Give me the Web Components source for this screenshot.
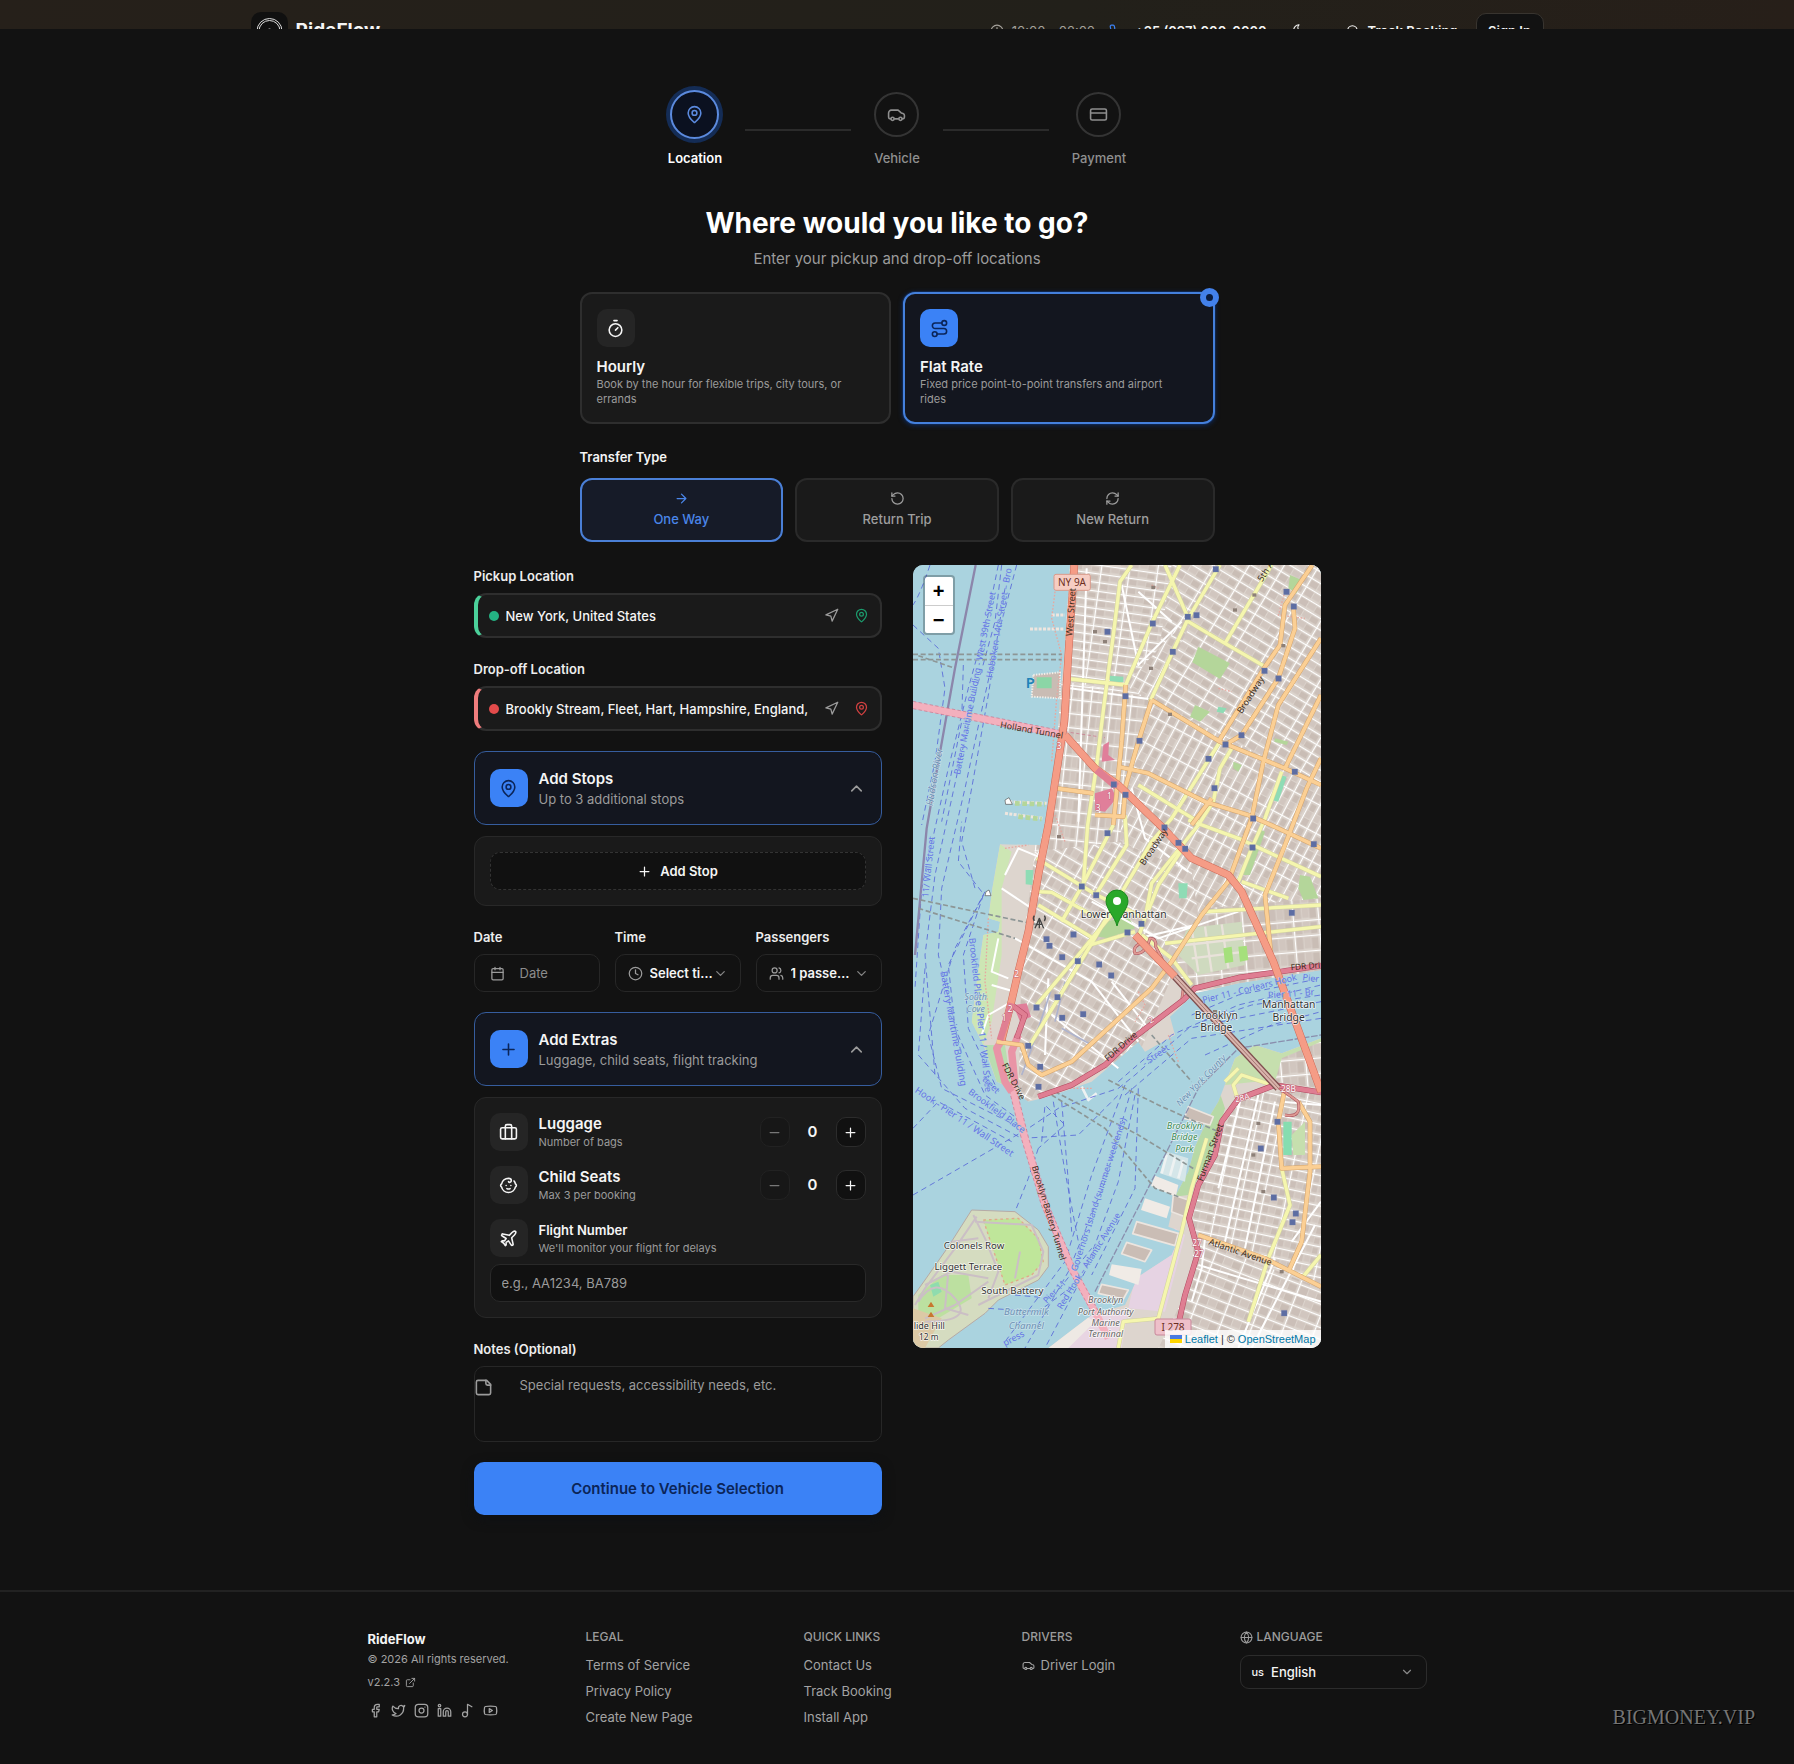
<!DOCTYPE html>
<html lang="en">
<head>
<meta charset="utf-8">
<title>RideFlow – Book a ride</title>
<style>
  html { background: #121212; }
  body {
    margin: 0; color: #f5f5f5; background: #121212;
    font-family: Inter, "Liberation Sans", sans-serif; font-size: 13px; line-height: 20px;
    --blue: #3b82f6; --ink: #0b2559; --muted: #9b9b9b; --card: #1a1a1a; --line: #2a2a2a; --tint: #13161f;
  }
</style>
</head>
<body>
<rf-app></rf-app>

<script>
const ICONS = {
  pin: '<path d="M20 10c0 4.993-5.539 10.193-7.399 11.799a1 1 0 0 1-1.202 0C9.539 20.193 4 14.993 4 10a8 8 0 0 1 16 0"/><circle cx="12" cy="10" r="3"/>',
  car: '<path d="M4.500 17.500H4a2 2 0 0 1-2-2V10a3.500 3.500 0 0 1 3.500-3.500H14l4 3.500 2.300.7a2.400 2.400 0 0 1 1.700 2.300V15.500a2 2 0 0 1-2 2h-.5M9.500 17.500h5"/><circle cx="7" cy="17.500" r="2"/><circle cx="17" cy="17.500" r="2"/>',
  card: '<rect x="2" y="5" width="20" height="14" rx="2"/><path d="M2 10h20"/>',
  timer: '<path d="M10 2h4M12 14l3-3"/><circle cx="12" cy="14" r="8"/>',
  route: '<circle cx="6" cy="19" r="3"/><path d="M9 19h8.500a3.500 3.500 0 0 0 0-7h-11a3.500 3.500 0 0 1 0-7H15"/><circle cx="18" cy="5" r="3"/>',
  arrow: '<path d="M5 12h14M12 5l7 7-7 7"/>',
  undo: '<path d="M3 12a9 9 0 1 0 9-9 9.750 9.750 0 0 0-6.740 2.740L3 8"/><path d="M3 3v5h5"/>',
  refresh: '<path d="M3 12a9 9 0 0 1 9-9 9.750 9.750 0 0 1 6.740 2.740L21 8"/><path d="M21 3v5h-5M21 12a9 9 0 0 1-9 9 9.750 9.750 0 0 1-6.740-2.740L3 16"/><path d="M8 16H3v5"/>',
  nav: '<path d="M3 11 22 2l-9 19-2-8z"/>',
  up: '<path d="m18 15-6-6-6 6"/>',
  down: '<path d="m6 9 6 6 6-6"/>',
  plus: '<path d="M5 12h14M12 5v14"/>',
  minus: '<path d="M5 12h14"/>',
  calendar: '<path d="M8 2v4M16 2v4M3 10h18"/><rect x="3" y="4" width="18" height="18" rx="2"/>',
  clock: '<circle cx="12" cy="12" r="10"/><path d="M12 6v6l4 2"/>',
  users: '<path d="M16 21v-2a4 4 0 0 0-4-4H6a4 4 0 0 0-4 4v2"/><circle cx="9" cy="7" r="4"/><path d="M22 21v-2a4 4 0 0 0-3-3.870M16 3.130a4 4 0 0 1 0 7.750"/>',
  bag: '<path d="M16 20V4a2 2 0 0 0-2-2h-4a2 2 0 0 0-2 2v16"/><rect x="2" y="6" width="20" height="14" rx="2"/>',
  baby: '<path d="M9 12h.01M15 12h.01M10 16c.5.3 1.200.5 2 .5s1.500-.2 2-.5"/><path d="M19 6.300a9 9 0 0 1 1.800 3.900 2 2 0 0 1 0 3.600 9 9 0 0 1-17.600 0 2 2 0 0 1 0-3.600A9 9 0 0 1 12 3c2 0 3.500 1.100 3.500 2.500s-.9 2.500-2 2.500c-.8 0-1.500-.4-1.500-1"/>',
  plane: '<path d="M17.800 19.200 16 11l3.500-3.500C21 6 21.500 4 21 3c-1-.5-3 0-4.500 1.500L13 8 4.800 6.200c-.5-.1-.9.1-1.100.5l-.3.5c-.2.5-.1 1 .3 1.300L9 12l-2 3H4l-1 1 3 2 2 3 1-1v-3l3-2 3.500 5.300c.3.4.8.5 1.300.3l.5-.2c.4-.3.6-.7.5-1.200z"/>',
  note: '<path d="M16 3H5a2 2 0 0 0-2 2v14a2 2 0 0 0 2 2h14a2 2 0 0 0 2-2V8Z"/><path d="M15 3v4a2 2 0 0 0 2 2h4"/>',
  phone: '<path d="M22 16.920v3a2 2 0 0 1-2.180 2 19.790 19.790 0 0 1-8.630-3.070 19.500 19.500 0 0 1-6-6 19.790 19.790 0 0 1-3.070-8.670A2 2 0 0 1 4.110 2h3a2 2 0 0 1 2 1.720c.127.960.361 1.903.7 2.810a2 2 0 0 1-.45 2.110L8.090 9.910a16 16 0 0 0 6 6l1.270-1.270a2 2 0 0 1 2.110-.45c.907.339 1.850.573 2.810.7A2 2 0 0 1 22 16.920z"/>',
  moon: '<path d="M12 3a6 6 0 0 0 9 9 9 9 0 1 1-9-9Z"/>',
  search: '<circle cx="11" cy="11" r="8"/><path d="m21 21-4.300-4.300"/>',
  globe: '<circle cx="12" cy="12" r="10"/><path d="M12 2a14.500 14.500 0 0 0 0 20 14.500 14.500 0 0 0 0-20M2 12h20"/>',
  external: '<path d="M15 3h6v6M10 14 21 3M18 13v6a2 2 0 0 1-2 2H5a2 2 0 0 1-2-2V8a2 2 0 0 1 2-2h6"/>',
  facebook: '<path d="M18 2h-3a5 5 0 0 0-5 5v3H7v4h3v8h4v-8h3l1-4h-4V7a1 1 0 0 1 1-1h3z"/>',
  twitter: '<path d="M22 4s-.7 2.100-2 3.400c1.600 10-9.400 17.300-18 11.600 2.200.1 4.400-.6 6-2C3 15.500.5 9.600 3 5c2.200 2.600 5.600 4.100 9 4-.9-4.200 4-6.600 7-3.800 1.100 0 3-1.200 3-1.200z"/>',
  instagram: '<rect x="2" y="2" width="20" height="20" rx="5"/><circle cx="12" cy="12" r="4"/><path d="M17.500 6.500h.01"/>',
  linkedin: '<path d="M16 8a6 6 0 0 1 6 6v7h-4v-7a2 2 0 0 0-4 0v7h-4v-7a6 6 0 0 1 6-6z"/><rect x="2" y="9" width="4" height="12"/><circle cx="4" cy="4" r="2"/>',
  music: '<circle cx="8" cy="18" r="4"/><path d="M12 18V2l7 4"/>',
  youtube: '<path d="M2.500 17a24.120 24.120 0 0 1 0-10 2 2 0 0 1 1.400-1.400 49.560 49.560 0 0 1 16.200 0A2 2 0 0 1 21.500 7a24.120 24.120 0 0 1 0 10 2 2 0 0 1-1.400 1.400 49.550 49.550 0 0 1-16.200 0A2 2 0 0 1 2.500 17"/><path d="m10 15 5-3-5-3z"/>'
};

const BASE = `
  *, *::before, *::after { box-sizing: border-box; }
  :host { display: block; }
  button, input, select, textarea { font: inherit; color: inherit; margin: 0; outline: none; }
  button { cursor: pointer; padding: 0; background: none; border: 0; }
  select { appearance: none; }
  a { color: inherit; text-decoration: none; }
  h1, h2, h3, p, ul { margin: 0; padding: 0; }
`;

function define(name, css, html) {
  customElements.define(name, class extends HTMLElement {
    connectedCallback() {
      if (this.shadowRoot) return;
      const attr = (key, fallback = '') => this.getAttribute(key) ?? fallback;
      this.attachShadow({ mode: 'open' }).innerHTML =
        `<style>${BASE}${css}</style>${typeof html === 'function' ? html(attr, this) : html}`;
    }
  });
}

define('rf-icon', `
  :host { display: inline-flex; flex: none; }
  svg { display: block; fill: none; stroke: currentColor; stroke-linecap: round; stroke-linejoin: round; }
`, a => `<svg width="${a('size', 16)}" height="${a('size', 16)}" viewBox="0 0 24 24" stroke-width="${a('weight', 2)}" aria-hidden="true">${ICONS[a('name')]}</svg>`);

define('rf-badge', `
  :host { display: flex; flex: none; align-items: center; justify-content: center; width: 38px; height: 38px;
          border-radius: 10px; background: #252525; color: #f5f5f5; }
  :host([tone="blue"]) { background: var(--blue); color: var(--ink); }
`, a => `<rf-icon name="${a('icon')}" size="19"></rf-icon>`);

/* ---------- header ---------- */
define('rf-header', `
  :host { height: 29px; overflow: hidden; background: linear-gradient(100deg, #26201a, #22201a 60%, #271f19); }
  header { display: flex; align-items: center; justify-content: space-between; height: 60px;
           max-width: 1293px; margin: 0 auto; }
  .brand { display: flex; align-items: center; gap: 8px; font-weight: 700; font-size: 19px; }
  .mark { width: 37px; height: 37px; border-radius: 10px; background: #101010; }
  .name { padding-top: 2px; }
  nav, .item { display: flex; align-items: center; }
  nav { gap: 18px; padding-top: 2px; font-weight: 600; }
  .item { gap: 8px; }
  .hours { color: #a5a29c; font-weight: 400; }
  .phone rf-icon { color: var(--blue); }
  .phone { gap: 12px; margin-left: -4px; }
  .moon { margin: 2px 22px 0 7px; }
  .sign { height: 36px; width: 68px; border: 1px solid #38342f; border-radius: 10px; background: #121212; }
`, `
  <header>
    <a class="brand" href="#">
      <svg class="mark" viewBox="0 0 37 37" fill="none" stroke="#ddd" aria-hidden="true">
        <circle cx="18.500" cy="19" r="12.500"/><circle cx="18.500" cy="19" r="10.500"/><circle cx="18.500" cy="21" r="4"/>
      </svg><span class="name">RideFlow</span></a>
    <nav>
      <span class="item hours"><rf-icon name="clock" size="14"></rf-icon>10:00 - 02:00</span>
      <a class="item phone" href="#"><rf-icon name="phone" size="14"></rf-icon>+35 (097) 000-0000</a>
      <button class="moon" aria-label="Toggle theme"><rf-icon name="moon" size="14"></rf-icon></button>
      <a class="item" href="#"><rf-icon name="search" size="14"></rf-icon>Track Booking</a>
      <button class="sign">Sign In</button>
    </nav>
  </header>`);

/* ---------- stepper ---------- */
define('rf-step', `
  :host { display: flex; flex-direction: column; align-items: center; gap: 12px; color: #8f8f8f; font-weight: 500; line-height: 18px; }
  .dot { display: flex; align-items: center; justify-content: center; width: 45px; height: 45px;
         border: 2px solid #343434; border-radius: 50%; }
  :host([active]) { color: #fff; font-weight: 600; }
  :host([active]) .dot { width: 49px; height: 49px; margin: -2px; border-color: #5b8ade; color: #5b8ade;
         background: #0b1120; box-shadow: 0 0 0 4px #142c55; }
`, a => `<span class="dot"><rf-icon name="${a('icon')}" size="19"></rf-icon></span><slot></slot>`);

define('rf-stepper', `
  :host { display: flex; align-items: center; justify-content: center; gap: 23px; }
  i { width: 106px; height: 2px; background: #2b2b2b; }
`, `<rf-step icon="pin" active>Location</rf-step><i></i><rf-step icon="car">Vehicle</rf-step><i></i><rf-step icon="card">Payment</rf-step>`);

/* ---------- service and transfer choice ---------- */
define('rf-service', `
  :host { flex: 1; position: relative; }
  button { display: flex; flex-direction: column; align-items: flex-start; width: 100%; height: 100%; padding: 15px;
           text-align: left; border: 2px solid #2e2e2e; border-radius: 12px; background: var(--card); }
  :host([selected]) button { border-color: #4480dc; background: var(--tint); box-shadow: 0 0 0 1px #10254a, 0 1px 4px 1px #10254a; }
  strong { margin-top: 10px; font-size: 15px; line-height: 20px; font-weight: 600; }
  button > span { max-width: 260px; color: var(--muted); font-size: 11px; line-height: 15px; }
  .mark { display: none; position: absolute; top: -4px; right: -4px; width: 19px; height: 19px;
          border: 6px solid #4381ea; border-radius: 50%; background: #0a1b3d; }
  :host([selected]) .mark { display: block; }
`, (a, el) => `<button aria-pressed="${el.hasAttribute('selected')}"><rf-badge icon="${a('icon')}" ${el.hasAttribute('selected') ? 'tone="blue"' : ''}></rf-badge>
   <strong>${a('label')}</strong><span><slot></slot></span></button><i class="mark"></i>`);

define('rf-transfer', `
  :host { flex: 1; }
  button { display: flex; flex-direction: column; align-items: center; justify-content: center; gap: 3px; width: 100%; height: 64px;
           border: 2px solid #2a2a2a; border-radius: 12px; background: var(--card); color: #9e9e9e; font-weight: 500; }
  :host([selected]) button { border-color: #4a7fd6; background: #161b28; color: #4a86ea; }
`, (a, el) => `<button aria-pressed="${el.hasAttribute('selected')}"><rf-icon name="${a('icon')}" size="15"></rf-icon><slot></slot></button>`);

/* ---------- form parts ---------- */
const LABEL = `label { display: block; margin-bottom: 6px; line-height: 22px; font-weight: 600; color: #ededed; }`;

define('rf-place', `
  ${LABEL}
  .box { display: flex; align-items: center; height: 45px; padding: 0 11px; background: var(--card);
         border: 2px solid #2e2e2e; border-left: 4px solid var(--edge); border-radius: 12px; }
  :host { --edge: #4bd09a; --dot: #24b383; --pin: #1c9a6c; }
  :host([kind="drop"]) { --edge: #ef7d7d; --dot: #e34b4b; --pin: #d04040; }
  i { flex: none; width: 10px; height: 10px; margin-right: 7px; border-radius: 50%; background: var(--dot); }
  input { flex: 1; min-width: 0; padding: 0; border: 0; background: none; font-weight: 500; }
  button { display: flex; margin-left: 15px; color: #9b9b9b; }
  .pin { color: var(--pin); }
`, a => `<label for="q">${a('label')}</label>
  <div class="box"><i></i><input id="q" type="text" value="${a('value')}">
  <button type="button" aria-label="Use my position"><rf-icon name="nav" size="15"></rf-icon></button>
  <button type="button" class="pin" aria-label="Pick on map"><rf-icon name="pin" size="15"></rf-icon></button></div>`);

define('rf-fold', `
  button { display: flex; align-items: center; gap: 11px; width: 100%; height: 74px; padding: 0 15px; text-align: left;
           border: 1px solid #365d9e; border-radius: 12px; background: var(--tint); }
  .text { flex: 1; display: flex; flex-direction: column; }
  strong { font-size: 15px; line-height: 21px; font-weight: 600; }
  span span { color: var(--muted); line-height: 20px; }
  .chev { color: #9b9b9b; }
`, a => `<button type="button" aria-expanded="true"><rf-badge tone="blue" icon="${a('icon')}"></rf-badge>
  <span class="text"><strong>${a('label')}</strong><span>${a('hint')}</span></span><rf-icon class="chev" name="up" size="19"></rf-icon></button>`);

define('rf-panel', `
  :host { display: flex; flex-direction: column; padding: 15px; border: 1px solid #282828; border-radius: 12px; background: var(--card); }
`, `<slot></slot>`);

define('rf-add-stop', `
  button { display: flex; align-items: center; justify-content: center; gap: 8px; width: 100%; height: 38px;
           border: 1px dashed #333; border-radius: 10px; background: #111; font-weight: 600; }
`, `<button type="button"><rf-icon name="plus" size="15"></rf-icon>Add Stop</button>`);

define('rf-picker', `
  :host { flex: 1; min-width: 0; }
  ${LABEL}
  .box { position: relative; display: flex; align-items: center; height: 38px; border: 1px solid #272727; border-radius: 10px; background: #121212; }
  .lead { position: absolute; left: 12px; color: #9b9b9b; pointer-events: none; }
  .chev { position: absolute; right: 12px; color: #858585; pointer-events: none; }
  select, input { width: 100%; height: 100%; border: 0; background: none; border-radius: 10px; }
  select { padding: 0 26px 0 34px; font-weight: 600; text-overflow: ellipsis; white-space: nowrap; overflow: hidden; }
  input { padding: 0 8px 0 45px; }
  input::placeholder { color: #8c8c8c; opacity: 1; }
  :host([kind="text"]) .lead { left: 15px; }
`, a => `<label for="f">${a('label')}</label><div class="box">` + (a('kind') === 'text'
    ? `<input id="f" type="text" placeholder="${a('value')}">`
    : `<select id="f"><option>${a('value')}</option></select><rf-icon class="chev" name="down" size="15"></rf-icon>`)
  + `<rf-icon class="lead" name="${a('icon')}" size="15"></rf-icon></div>`);

define('rf-counter', `
  :host { display: flex; align-items: center; gap: 11px; height: 38px; margin-bottom: 15px; }
  .text { flex: 1; display: flex; flex-direction: column; }
  strong { font-size: 15px; line-height: 20px; font-weight: 600; }
  .text span { color: var(--muted); font-size: 11px; line-height: 17px; }
  button { display: flex; align-items: center; justify-content: center; width: 30px; height: 30px;
           border: 1px solid #2c2c2c; border-radius: 10px; background: #111; }
  button:disabled { color: #777; background: #171717; border-color: #222; }
  output { width: 24px; text-align: center; font-size: 15px; font-weight: 600; }
`, a => `<rf-badge icon="${a('icon')}"></rf-badge><div class="text"><strong>${a('label')}</strong><span>${a('hint')}</span></div>
  <button type="button" disabled aria-label="Fewer"><rf-icon name="minus" size="15"></rf-icon></button><output>0</output>
  <button type="button" aria-label="More"><rf-icon name="plus" size="15"></rf-icon></button>`);

define('rf-flight', `
  label { display: flex; align-items: center; gap: 11px; margin-bottom: 7px; }
  .text { display: flex; flex-direction: column; padding-top: 2px; }
  strong { line-height: 19px; font-weight: 600; }
  .text span { color: var(--muted); font-size: 11px; line-height: 17px; }
  input { display: block; width: 100%; height: 38px; padding: 0 11px; border: 1px solid #292929; border-radius: 10px; background: #111; }
  input::placeholder { color: #9b9b9b; opacity: 1; }
`, `<label for="n"><rf-badge icon="plane"></rf-badge><span class="text"><strong>Flight Number</strong><span>We'll monitor your flight for delays</span></span></label>
  <input id="n" type="text" placeholder="e.g., AA1234, BA789">`);

define('rf-notes', `
  ${LABEL}
  .box { position: relative; }
  rf-icon { position: absolute; left: 0; top: 12px; color: #9b9b9b; }
  textarea { display: block; width: 100%; height: 76px; padding: 8px 12px 8px 45px; resize: none; border: 1px solid #272727;
             border-radius: 10px; background: #121212; }
  textarea::placeholder { color: #9b9b9b; opacity: 1; }
`, `<label for="t">Notes (Optional)</label><div class="box"><textarea id="t" placeholder="Special requests, accessibility needs, etc."></textarea>
  <rf-icon name="note" size="19"></rf-icon></div>`);

define('rf-submit', `
  button { width: 100%; height: 53px; border-radius: 10px; background: var(--blue); color: var(--ink); font-size: 15px; font-weight: 600; box-shadow: 0 4px 12px #0e1014; }
`, `<button type="button"><slot></slot></button>`);

/* ---------- map ---------- */
const line = (d, color, width, extra = '') => `<path d="${d}" stroke="${color}" stroke-width="${width}" ${extra}/>`;
const road = (list, fill, edge, width) =>
  list.map(d => line(d, edge, width + 3)).join('') + list.map(d => line(d, fill, width)).join('');
const label = (x, y, text, size, turn = 0, cls = '') =>
  `<text transform="translate(${x} ${y}) rotate(${turn})" font-size="${size}" class="${cls}">${text}</text>`;
const grid = (id, w, h, turn) => `<pattern id="${id}" width="${w}" height="${h}" patternUnits="userSpaceOnUse" patternTransform="rotate(${turn})">
  <rect width="${w}" height="${h}" fill="#dcd4cd"/><rect x="5" y="5" width="${w / 3 - 5}" height="${h - 10}" fill="#cbbfb8"/>
  <rect x="${w / 3 + 3}" y="5" width="${w / 3 - 5}" height="${h - 12}" fill="#d1c6bf"/><rect x="${w * 2 / 3}" y="7" width="${w / 3 - 5}" height="${h - 12}" fill="#c9bdb5"/><path d="M0 0H${w}M0 0V${h}" stroke="#fff" stroke-width="6"/></pattern>`;

const YELLOW = ['M680 30 645 80 625 240 597 450 575 630 548 810 535 990', 'M825 30 740 205 662 390', 'M780 30 850 190',
  'M945 30 850 190 803 290 735 440', 'M850 200 955 262 1080 335', 'M1100 30 960 265', 'M497 372 662 390',
  'M945 560 800 790 740 860 560 1165 375 1470', 'M980 580 945 640 925 740 880 810 740 985 722 1080 700 1150',
  'M1130 650 1080 790 1040 880 1000 980', 'M700 690 830 770 880 800', 'M395 910 575 1020 720 1090', 'M400 1010 440 1012 570 1085',
  'M400 1050 565 1150', 'M625 810 530 995 470 1100', 'M660 780 665 870 572 1020', 'M660 1030 520 1200 395 1350', 'M555 1170 690 1130',
  'M840 870 760 990 725 1080', 'M850 795 1000 850 1248 965', 'M1010 980 1150 1030', 'M900 1070 1248 1050', 'M780 1165 1248 1115', 'M710 1140 800 1210 860 1290',
  'M1130 1840 1155 1950 1090 2110 1030 2300', 'M1000 1640 985 1590 1010 1560 1100 1590', 'M960 1580 1000 1540', 'M905 1750 860 1900 830 2030 760 2290 655 2300 640 2379', 'M1248 2100 1190 2170'];
const ORANGE = ['M662 390 650 560 625 810', 'M740 435 945 560 1140 640 1248 690', 'M740 435 700 560 660 700 655 785 570 780',
  'M1222 30 1140 150 1125 270 1080 335 940 560', 'M1165 155 1170 220 1120 370 1010 540 960 570', 'M1248 250 1120 450 1075 620 1040 790 970 980 890 1080 800 1220 740 1300 500 1520 410 1560 370 1530 350 1470 275 1460',
  'M1248 420 1140 640', 'M1248 610 1205 700 1140 870 1080 1020 1100 1220', 'M640 635 730 655 900 740 1030 780', 'M455 700 565 715', 'M1030 780 1120 820 1248 880', 'M860 810 920 730',
  'M1140 1600 1120 1700 1130 1840 1248 1835', 'M1180 1640 1215 1700 1215 1850 1190 2060 1150 2150', 'M880 2040 1080 2110 1248 2195'];
const TRUNK = ['M508 30 490 300 478 500 430 810 400 960 370 1130 340 1250 318 1345 290 1455', 'M480 540 570 640 640 690 770 815 860 910 970 960 1010 1010 1105 1220 1248 1610', 'M690 1140 810 1265'];
const MOTOR = ['M400 1625 500 1590 600 1530 690 1445 835 1335 870 1300 1000 1268 1248 1232', 'M1248 1612 1110 1590 1000 1632 950 1700 930 1800 880 1890 852 1990 880 2090 840 2220 815 2330', 'M320 1350 360 1380 335 1450'];
const RAMPS = ['M715 1160Q680 1175 690 1195 720 1200 735 1150 755 1150 752 1175L780 1230 835 1300 830 1340', 'M1140 1680Q1190 1690 1180 1640', 'M1110 1590 1180 1640'];
const FERRY = ['M75 30Q45 120 24 150', 'M24 210 100 280 120 400 90 620 50 810', 'M280 30 245 200 190 400 130 640 50 1000 30 1300', 'M290 30 270 200 215 400 160 640 90 960 60 1200 90 1560',
  'M335 30 290 200 240 420 180 700 110 1000 100 1200 170 1500', 'M300 100 250 420 200 700 170 860 210 1000', 'M175 330 170 500 110 800', 'M230 1010 160 920 170 800', 'M240 1010 150 1180 70 1440 110 1600 330 1710',
  'M230 1030 130 1230 150 1420 240 1620 350 1700', 'M235 1020 175 1200 190 1420 280 1610', 'M60 1240 40 1500 180 1660 350 1750 520 1740 640 1620', 'M24 1920 370 1720 460 1660 640 1600', 'M24 1720 100 1640 320 1760',
  'M445 1640 480 1850 520 2060', 'M470 1640 490 1880 500 2030', 'M660 1590 560 1860 480 2120 300 2360', 'M680 1600 600 1880 490 2150 360 2379', 'M690 1620 640 1880 540 2150 420 2379', 'M700 1600 690 1900 560 2160',
  'M640 1600 690 1560 850 1420 1248 1340', 'M660 1620 860 1450 1248 1390', 'M640 1580 800 1440 1000 1350 1248 1290', 'M860 1380 1000 1320 1248 1270', 'M400 1780 370 1870 330 1970', 'M410 1760 420 1650 480 1710 400 1780', 'M330 2220 440 2230 560 2080', 'M250 2260 400 2270 520 2180', 'M890 1400 1040 1350 1248 1320', 'M900 1500 1100 1410 1248 1370'];
const STATIONS = [[932, 42], [607, 230], [743, 205], [848, 185], [874, 180], [803, 290], [1144, 110], [1166, 154], [1078, 347], [1120, 370], [661, 423], [703, 557], [961, 568], [1009, 540], [910, 611], [928, 699], [1169, 650], [1044, 790], [626, 688], [661, 719],
  [607, 834], [778, 817], [820, 863], [840, 881], [1042, 877], [1226, 867], [530, 994], [573, 1020], [709, 1106], [667, 1132], [505, 1138], [424, 1152], [433, 1172], [471, 1206], [518, 1218], [582, 1228], [618, 1261], [457, 1326], [394, 1357], [471, 1388], [534, 1377], [369, 1472], [405, 1535], [1160, 1073], [400, 1595], [1117, 1700], [1067, 1780], [1106, 1927], [1172, 1975], [1162, 2001], [1137, 2274]];
const MANHATTAN = 'M495 30 478 300 465 430 455 600 430 760 405 870 285 868 262 1000 250 1090 285 1100 280 1130 235 1140 215 1280 200 1400 235 1470 275 1580 320 1600 370 1640 440 1622 560 1580 700 1460 720 1490 810 1440 795 1385 870 1315 1000 1285 1248 1245V30Z';
const BROOKLYN = 'M1248 1450 1130 1495 1050 1470 990 1510 940 1640 910 1690 870 1775 850 1850 810 1925 790 2015 830 2030 800 2100 700 2165 660 2250 560 2280 430 2379H1248Z';

define('rf-map', `
  :host { position: relative; min-height: 783px; align-self: start; overflow: hidden; border-radius: 10px; background: #aad3df; }
  svg.map { display: block; width: 100%; height: 783px; }
  .map text { font-family: "Noto Sans", sans-serif; fill: #333; stroke: #fff; stroke-opacity: .75; stroke-width: 5; paint-order: stroke; stroke-linejoin: round; }
  .map .mid { text-anchor: middle; }
  .map .ferry { fill: #6573e6; stroke: #aad3df; stroke-width: 3; }
  .map .water { fill: #6c91b4; font-style: italic; stroke: #d3e6ee; stroke-width: 4; }
  .map .park { fill: #3a8a55; font-style: italic; text-anchor: middle; }
  .map .port { fill: #666; font-style: italic; text-anchor: middle; }
  .map .road { fill: #3d2f22; stroke: none; }
  .map .exit { fill: #fff; stroke: #b9566a; stroke-width: 3; }
  .map .shield { fill: #6b2d22; stroke: none; text-anchor: middle; }
  .map .parking { fill: #1f83b8; stroke: none; font-weight: 600; }
  .zoom { position: absolute; top: 10px; left: 10px; display: flex; flex-direction: column; border: 2px solid rgba(0,0,0,.25); border-radius: 4px; background: #fff; background-clip: padding-box; }
  .zoom button { width: 28px; height: 28px; color: #000; font: 700 20px/26px "Liberation Sans", sans-serif; }
  .zoom button + button { border-top: 1px solid #ccc; }
  .credit { position: absolute; right: 0; bottom: 0; display: flex; align-items: center; gap: 3px; padding: 0 5px; color: #333;
            background: rgba(255,255,255,.8); font: 11px/18px "Liberation Sans", sans-serif; }
  .credit a { color: #0078a8; }
  .pinmark { position: absolute; left: 50%; top: 324px; margin-left: -12px; }
`, () => `
  <svg class="map" viewBox="24 30 1224 2349" preserveAspectRatio="xMidYMid slice" fill="none" stroke-linejoin="round" role="img" aria-label="Map of Lower Manhattan">
    <defs>
      ${grid('gw', 84, 26, 8)}${grid('ge', 90, 30, 31)}${grid('gs', 80, 29, -62)}${grid('gd', 66, 36, 30)}${grid('gl', 76, 46, -5)}${grid('gb', 90, 33, 21)}${grid('gh', 66, 30, 12)}${grid('gt', 60, 42, 6)}
      <clipPath id="land"><path d="${MANHATTAN}"/></clipPath><clipPath id="kings"><path d="${BROOKLYN}"/></clipPath>
    </defs>
    <path d="M24 30H1248V2379H24Z" fill="#aad3df"/>
    <g clip-path="url(#land)">
      <path d="M180 30H1248V1700H180Z" fill="#ddd5ce"/>
      <path d="M480 30H830L740 440 480 420Z" fill="url(#gw)"/><path d="M430 370 740 430 640 900 380 1000Z" fill="url(#gt)"/>
      <path d="M800 30H1248V690L740 435Z" fill="url(#ge)"/><path d="M660 700 740 435 1248 690V1060L890 1080 720 1000 640 900Z" fill="url(#gs)"/>
      <path d="M660 390 800 240 860 200 740 440Z" fill="url(#gs)"/>
      <path d="M390 890 640 860 860 950 880 1080 700 1500 340 1650 350 1200Z" fill="url(#gd)"/><path d="M900 1060 1248 1030V1260L860 1320 780 1230Z" fill="url(#gl)"/>
      <path d="M285 868 262 1000 250 1090 235 1140 200 1400 235 1470 260 1400 290 1200 290 1000 320 890Z" fill="#cde6b4"/>
      <path d="M238 1470 300 1470 320 1600 275 1580Z" fill="#b9ddb0"/><path d="M845 1120 1010 1100 1020 1230 880 1260 820 1200Z" fill="#cfdabf"/>
      <path d="M840 1170 1020 1150M860 1210 1020 1190M900 1115 920 1250M950 1108 970 1240M860 1120 880 1250" stroke="#e9e2da" stroke-width="7"/>
    </g>
    <g fill="#b4d69a">
      <path d="M880 275 975 325 945 372 862 322Z"/><path d="M600 1100 670 1085 690 1120 610 1150 580 1145Z"/><path d="M1125 660 1145 665 1120 740 1100 735Z" fill="#8fdcb5"/>
      <path d="M1060 820 1080 830 1035 960 1015 960Z"/><path d="M1185 960 1215 965 1240 1030 1195 1035 1180 1000Z"/><path d="M820 985 848 985 845 1030 822 1030Z" fill="#8fdcb5"/>
      <path d="M615 362 655 365 655 382 615 380Z" fill="#8fdcb5"/><path d="M362 945 385 945 382 990 362 988Z" fill="#8fdcb5"/><path d="M1155 60 1190 75 1175 115 1150 100Z"/><path d="M870 450 915 470 885 500 855 485Z"/><path d="M940 455 965 460 955 475 935 470Z" fill="#8fdcb5"/><path d="M955 1180 980 1175 985 1220 960 1225ZM1000 1175 1025 1172 1030 1215 1005 1220Z" fill="#a5e07c"/><path d="M1110 550 1150 560 1145 570 1108 560ZM985 620 1010 630 1000 650 985 640Z"/>
    </g>
    <path d="M385 360 465 352 465 430 380 425Z" fill="#c9bcb4" stroke="#f3efe9" stroke-width="6" stroke-dasharray="4 4"/><path d="M395 367H440V400H395Z" fill="#8bd6a6"/>
    <path d="M375 222H475M440 180H480M300 740 425 745M300 775 415 790" stroke="#efe6df" stroke-width="9" stroke-dasharray="9 4"/>
    <path d="M330 745 420 748M340 785 410 792" stroke="#b4d69a" stroke-width="14" stroke-dasharray="14 8"/>
    <g clip-path="url(#kings)">
      <path d="M400 1400H1248V2379H400Z" fill="#ddd5ce"/><path d="M1000 1620 1248 1600V2190L870 2050 860 1960Z" fill="url(#gh)"/>
      <path d="M870 2050 1248 2200V2379H760L850 2200Z" fill="url(#gb)"/>
      <path d="M1248 1450 1130 1495 1050 1470 990 1510 960 1590 1248 1560Z" fill="#c6dfae"/><path d="M1130 1510 1248 1460V1600L1110 1580Z" fill="url(#gl)"/><path d="M940 1600 960 1660 920 1800 850 1920 810 1925 870 1775Z" fill="#b7d9a6"/>
      <path d="M720 2090 810 2020 840 2040 780 2270 670 2260 690 2170Z" fill="#e6d3e3"/><path d="M560 2280 670 2260 650 2379H470Z" fill="#e8d5e2"/><path d="M430 2379 545 2285 570 2300 490 2379Z" fill="#eee9e4"/><path d="M1135 1700H1160V1800H1135Z" fill="#86ddb0"/><path d="M1160 1740 1200 1700 1200 1800 1165 1800Z" fill="#c6dfae"/>
    </g>
    <g fill="#cabdb5" stroke="#ece5df" stroke-width="5"><path d="M695 2000 820 2035 810 2072 683 2036Z"/><path d="M665 2062 740 2085 720 2120 650 2096Z"/><path d="M590 2188 670 2205 655 2232 580 2215Z"/><path d="M850 1655 925 1685 915 1710 838 1690Z"/><path d="M805 1920 850 1935 840 1985 800 1970Z"/></g>
    <g fill="#f0ebe6"><path d="M620 2128 710 2142 700 2190 612 2160Z"/><path d="M750 1862 820 1890 812 1925 738 1893Z"/><path d="M720 1930 795 1955 785 1990 708 1965Z"/><path d="M785 1790 850 1810 840 1880 765 1855Z" fill="#d5e6e9"/></g>
    <path d="M785 1800 770 1855M810 1808 795 1862M835 1815 820 1870M530 1595 550 1635 575 1615" stroke="#eef2f2" stroke-width="8"/>
    <path d="M200 1965 330 1970 400 2025 430 2075 430 2135 400 2175 280 2235 240 2275 130 2355 100 2379H24V2225L60 2175 130 2075Z" fill="#d5dcc0" stroke="#b6aaa5" stroke-width="3"/>
    <path d="M235 1995 340 1990 400 2050 415 2120 380 2160 300 2190 270 2100Z" fill="#bfe69a" stroke="#e1a88b" stroke-width="4" stroke-dasharray="8 9"/>
    <path d="M40 2220 110 2160 190 2160 200 2230 100 2290 40 2280Z" fill="#bce0a0"/><path d="M24 2260 110 2290 60 2379H24Z" fill="#dcc9a5"/><path d="M75 2190 100 2180 110 2210 85 2225Z" fill="#8fdcae"/>
    <path d="M205 1980 240 2050 280 2150 250 2230M210 2000 380 2010 415 2090 400 2160 220 2250M60 2190 140 2150 250 2170M60 2290 150 2250 250 2180M140 2060 220 2050M215 1985 150 2080 60 2200 30 2250M130 2150 120 2260 190 2280M345 2090 330 2170M40 2240Q90 2160 150 2230T60 2300" stroke="#cbbfc5" stroke-width="6"/>
    <g stroke="#fff" stroke-width="6">
      <path d="M300 960 340 880 400 905M290 1000 380 1060M260 1290 330 1310M280 1150 260 1250 310 1270M230 1440 250 1380 320 1340M495 400 730 432M545 40 520 800M650 90 700 330 830 200M700 110 800 200M330 1150 560 1280 700 1460M430 1270 420 1500M440 1380 640 1540M620 1280 730 1420M680 700 720 850 850 950M560 1040 760 1150 1000 1070M700 1150 870 1110"/>
      <path d="M1230 2010 1040 2379M1110 2110 1000 2379M880 2130 1248 2240M900 2050 890 2140 860 2240M1010 1620 940 1900M1060 1620 960 2060M1110 1640 1020 2080M1248 1940 1160 2060M1248 1650 1130 1640"/>
    </g>
    <path d="M440 1300 380 1480 350 1560M470 1420 560 1470M480 1280 450 1400" stroke="#aeb3cd" stroke-width="5"/>
    <g stroke="#e6a8a0" stroke-width="4" stroke-dasharray="5 5"><path d="M455 70 440 190 470 300 455 430 440 620M300 880 370 870M250 1090 240 1280 260 1450M700 1310 720 1350 690 1400M820 1520 790 1440M450 780 480 860M560 1600 480 1600M740 90 760 100M940 400 980 410M1140 110 1120 180 1200 190"/></g>
    <g stroke="#5868d8" stroke-width="3" stroke-dasharray="17 12" stroke-opacity=".85">${FERRY.map(d => `<path d="${d}"/>`).join('')}</g>
    <path d="M212 30 150 340 100 620 65 820 30 1200" stroke="#8c86ab" stroke-width="7"/><path d="M570 2210 780 1800 880 1600 1000 1480 1248 1440" stroke="#8a8fae" stroke-width="4" stroke-dasharray="20 5"/>
    <g stroke="#8d9696" stroke-width="5" stroke-dasharray="15 8"><path d="M24 298H470M24 314H470M40 302 150 340M24 1030 400 1110M40 1060 330 1150M440 1620 600 1720 750 1900 820 1925M450 1610 700 1740 880 1850M610 1575 760 1650 940 1730M740 1440 860 1580"/></g>
    ${line('M24 450 480 540', '#f3b0bd', 22)}${line('M24 439 480 529M24 461 480 551M480 530 600 548', '#c8718a', 2, 'stroke-dasharray="10 7"')}
    ${line('M320 1590 360 1750 420 1950 500 2140 570 2270 610 2350', '#f3b0bd', 22)}${line('M309 1590 349 1750 409 1950 489 2140 559 2270M331 1590 371 1750 431 1950 511 2140 581 2270', '#c8718a', 2, 'stroke-dasharray="10 7"')}
    ${line('M295 1450 275 1480 300 1580 320 1610M340 1440 320 1490 330 1590', '#e994a6', 22)}
    <path d="M570 715 620 700 635 730 600 770 570 765ZM595 570 612 560 610 600 630 615 590 620Z" fill="#e07f9a"/>
    <path d="M325 1350 365 1345 378 1385 345 1400Z" fill="#e07f9a"/>
    ${road(YELLOW, '#f5f6ae', '#d2d2a0', 10)}${road(ORANGE, '#fbcf94', '#d3a36a', 11)}
    ${road(RAMPS, '#df9a92', '#a8505f', 6)}${road(MOTOR, '#df7e92', '#b0485f', 14)}${road(TRUNK, '#f59c86', '#cc6a58', 20)}
    ${line('M575 645 635 695', '#e07f92', 22)}${line('M285 1455 320 1345', '#e07f92', 20)}
    ${line('M810 1265 1120 1600', '#7f4f4f', 22)}${line('M810 1265 1120 1600', '#d9b4ac', 14)}${line('M810 1265 1120 1600', '#8a5a56', 2)}
    <g fill="#5d6da3" stroke="#7c86ad" stroke-width="1">${STATIONS.map(([x, y]) => `<rect x="${x - 8}" y="${y - 8}" width="17" height="17"/>`).join('')}</g>
    <g fill="#8d8078">${[[745, 97], [570, 230], [990, 165], [738, 340], [795, 478], [1135, 272], [1048, 120], [462, 845], [1060, 1705], [1045, 1800], [1130, 2150], [600, 260], [1075, 1910], [930, 1370]].map(([x, y]) => `<rect x="${x - 6}" y="${y - 5}" width="12" height="10"/>`).join('')}</g>
    <path d="M390 1120 403 1090 416 1120M395 1108H411M403 1090V1120M388 1098Q382 1090 388 1082M418 1098Q424 1090 418 1082" stroke="#444" stroke-width="4"/>
    <path d="M300 735 312 728 322 748H302ZM243 1010 252 1005 258 1022H240Z" fill="#fff" stroke="#555" stroke-width="2"/>
    <path d="M78 2240 88 2256H68ZM78 2270 88 2286H68Z" fill="#c8772f"/>
    <rect x="447" y="58" width="109" height="48" rx="6" fill="#f6cdc3" stroke="#d99a8b" stroke-width="3"/><rect x="750" y="2292" width="108" height="48" rx="6" fill="#eec0ca" stroke="#c8879a" stroke-width="3"/>
    ${label(501, 94, 'NY 9A', 30, 0, 'shield')}${label(804, 2328, 'I 278', 30, 0, 'shield')}
    ${label(502, 244, 'West Street', 27, -86, 'road')}${label(284, 518, 'Holland Tunnel', 27, 10, 'road')}
    ${label(83, 754, 'Hudson River', 30, -80, 'water')}
    ${label(165, 660, 'Battery Maritime Building - West 39th Street', 27, -79, 'ferry')}
    ${label(262, 370, 'Hoboken 14th Street – Bro', 27, -80, 'ferry')}
    ${label(1010, 478, 'Broadway', 27, -57, 'road')}${label(718, 933, 'Broadway', 27, -56, 'road')}${label(1072, 82, '5th A', 27, -58, 'road')}
    ${label(362, 400, 'P', 44, 0, 'parking')}
    ${label(70, 1028, '11/ Wall Street', 27, -84, 'ferry')}
    ${label(192, 1150, 'Brookfield Place - Pier 11 / Wall Stree', 27, 84, 'ferry')}${label(106, 1250, 'Battery Maritime Building', 29, 80, 'ferry')}
    ${label(212, 1336, 'South', 26, 0, 'water mid')}${label(212, 1370, 'Cove', 26, 0, 'water mid')}
    ${label(656, 1090, 'Lower Manhattan', 31, 0, 'mid')}
    ${label(934, 1392, 'Brooklyn', 31, 0, 'mid')}${label(934, 1429, 'Bridge', 31, 0, 'mid')}
    ${label(1151, 1358, 'Manhattan', 31, 0, 'mid')}${label(1151, 1398, 'Bridge', 31, 0, 'mid')}
    ${label(1158, 1246, 'FDR Dri', 25, -5, 'road')}${label(608, 1520, 'FDR Drive', 26, -41, 'road')}${label(290, 1530, 'FDR Drive', 26, 62, 'road')}
    ${label(895, 1345, 'Pier 11 - Corlears Hook', 27, -14, 'ferry')}${label(1090, 1330, 'Pier 11 - Br', 27, -4, 'ferry')}${label(1192, 1276, 'Pier', 27, 6, 'ferry')}
    ${label(720, 1535, '- Street', 27, -35, 'ferry')}${label(825, 1655, 'New York County', 27, -46, 'water')}
    ${label(28, 1610, 'Hook - Pier 11 / Wall Street', 28, 34, 'ferry')}${label(188, 1615, 'Brookfield Place', 27, 36, 'ferry')}${label(230, 1575, 'treet', 27, 44, 'ferry')}
    ${label(380, 1835, 'Brooklyn-Battery Tunnel', 26, 73, 'road')}
    ${label(515, 2150, 'Governors Island (summer weekends)', 27, -72, 'ferry')}${label(470, 2264, 'Red Hook – Atlantic Avenue', 26, -58, 'ferry')}${label(425, 2246, 'Pier 11', 26, -45, 'ferry')}${label(300, 2374, 'press', 27, -28, 'ferry')}
    ${label(838, 1722, 'Brooklyn', 27, 0, 'park')}${label(838, 1756, 'Bridge', 27, 0, 'park')}${label(838, 1790, 'Park', 27, 0, 'park')}
    ${label(893, 1880, 'Furman Street', 27, -70, 'road')}${label(910, 2068, 'Atlantic Avenue', 27, 19, 'road')}
    ${label(992, 1642, '28A', 25, -14, 'exit')}${label(1128, 1612, '28B', 25, 0, 'exit')}${label(862, 2072, '27', 25, 0, 'exit')}${label(868, 2106, '27', 25, 0, 'exit')}
    ${label(455, 582, '3', 25, 0, 'exit')}${label(572, 768, '3', 25, 0, 'exit')}${label(606, 732, '1', 25, 0, 'exit')}${label(328, 1266, '2', 25, 0, 'exit')}${label(308, 1372, '2', 25, 0, 'exit')}${label(290, 1398, '1', 25, 0, 'exit')}${label(736, 1406, '2', 25, -30, 'exit')}
    ${label(207, 2082, 'Colonels Row', 29, 0, 'mid')}${label(190, 2145, 'Liggett Terrace', 29, 0, 'mid')}${label(322, 2218, 'South Battery', 29, 0, 'mid')}
    ${label(26, 2321, 'lide Hill', 27)}${label(42, 2354, '12 m', 25)}
    ${label(364, 2279, 'Buttermilk', 29, 0, 'water mid')}${label(364, 2321, 'Channel', 29, 0, 'water mid')}
    ${label(602, 2245, 'Brooklyn', 27, 0, 'port')}${label(602, 2279, 'Port Authority', 27, 0, 'port')}${label(602, 2313, 'Marine', 27, 0, 'port')}${label(602, 2347, 'Terminal', 27, 0, 'port')}
  </svg>
  <svg class="pinmark" width="24" height="38" viewBox="0 0 24 38" aria-hidden="true"><path d="M12 37C10 28 1 20 1 12a11 11 0 0 1 22 0c0 8-9 16-11 25Z" fill="#2aa82a" stroke="#1c8a1f"/><circle cx="12" cy="12" r="4" fill="#fff"/></svg>
  <div class="zoom"><button type="button" aria-label="Zoom in">+</button><button type="button" aria-label="Zoom out">−</button></div>
  <div class="credit"><svg width="12" height="8" viewBox="0 0 12 8" aria-hidden="true"><path fill="#4c7be1" d="M0 0h12v4H0z"/><path fill="#ffd500" d="M0 4h12v4H0z"/></svg>
    <a href="#">Leaflet</a><span>|</span><span>©</span><a href="#">OpenStreetMap</a></div>`);

/* ---------- footer ---------- */
define('rf-links', `
  h3 { display: flex; align-items: center; gap: 4px; font-size: 12px; line-height: 16px; font-weight: 500; color: var(--muted); text-transform: uppercase; }
  div { display: flex; flex-direction: column; gap: 6px; margin-top: 10px; }
  ::slotted(a) { display: flex; align-items: center; gap: 6px; }
`, a => `<h3>${a('icon') ? `<rf-icon name="${a('icon')}" size="13"></rf-icon>` : ''}${a('label')}</h3><div><slot></slot></div>`);

define('rf-language', `
  label { display: flex; align-items: center; height: 34px; padding: 0 12px 0 11px; border: 1px solid #2c2c2c; border-radius: 9px; font-weight: 500; }
  span { font-size: 11px; }
  select { flex: 1; min-width: 0; padding: 0 0 0 7px; border: 0; background: none; }
  rf-icon { color: #8a8a8a; }
`, `<label><span>us</span><select aria-label="Language"><option>English</option></select><rf-icon name="down" size="14"></rf-icon></label>`);

define('rf-footer', `
  :host { position: relative; border-top: 2px solid #222; }
  .cols { display: grid; grid-template-columns: repeat(5, 1fr); gap: 31px; max-width: 1059px; margin: 0 auto; padding: 37px 0 36px; }
  .brand { display: flex; flex-direction: column; align-items: flex-start; color: #a3a3a3; font-size: 11px; }
  .brand strong { color: #f5f5f5; font-size: 13px; }
  .brand a { display: flex; align-items: center; gap: 5px; margin-top: 3px; }
  .brand .social { display: flex; gap: 8px; margin-top: 8px; }
  rf-links a { color: #a3a3a3; }
  .stamp { position: absolute; right: 39px; bottom: 35px; color: #757575; font: 20px/22px "Liberation Serif", serif; text-shadow: 1px 1px 0 #000; }
`, `
  <div class="cols">
    <div class="brand"><strong>RideFlow</strong><span>© 2026 All rights reserved.</span>
      <a href="#">v2.2.3 <rf-icon name="external" size="11"></rf-icon></a>
      <div class="social">${['facebook', 'twitter', 'instagram', 'linkedin', 'music', 'youtube'].map(n => `<a href="#" aria-label="${n}"><rf-icon name="${n}" size="15"></rf-icon></a>`).join('')}</div>
    </div>
    <rf-links label="Legal"><a href="#">Terms of Service</a><a href="#">Privacy Policy</a><a href="#">Create New Page</a></rf-links>
    <rf-links label="Quick Links"><a href="#">Contact Us</a><a href="#">Track Booking</a><a href="#">Install App</a></rf-links>
    <rf-links label="Drivers"><a href="#"><rf-icon name="car" size="13"></rf-icon>Driver Login</a></rf-links>
    <rf-links label="Language" icon="globe"><rf-language></rf-language></rf-links>
  </div>
  <span class="stamp">BIGMONEY.VIP</span>`);

/* ---------- page ---------- */
define('rf-app', `
  main { padding: 63px 24px 75px; }
  h1 { margin-top: 38px; text-align: center; font-size: 28px; line-height: 37px; font-weight: 700; color: #fff; }
  .lead { margin: 6px 0 22px; text-align: center; font-size: 15px; line-height: 22px; color: #9b9b9b; }
  .choice { max-width: 635px; margin: 0 auto; }
  .row { display: flex; gap: 12px; }
  h2 { margin: 24px 0 11px; font-size: 13px; line-height: 19px; font-weight: 600; }
  .split { display: grid; grid-template-columns: 1fr 1fr; gap: 31px; max-width: 847px; margin: 23px auto 0; }
  form { display: flex; flex-direction: column; gap: 20px; min-width: 0; }
  .group { display: flex; flex-direction: column; gap: 11px; }
  .trio { display: flex; gap: 15px; }
`, `
  <rf-header></rf-header>
  <main>
    <rf-stepper></rf-stepper>
    <h1>Where would you like to go?</h1>
    <p class="lead">Enter your pickup and drop-off locations</p>
    <section class="choice">
      <div class="row">
        <rf-service icon="timer" label="Hourly">Book by the hour for flexible trips, city tours, or errands</rf-service>
        <rf-service icon="route" label="Flat Rate" selected>Fixed price point-to-point transfers and airport rides</rf-service>
      </div>
      <h2>Transfer Type</h2>
      <div class="row">
        <rf-transfer icon="arrow" selected>One Way</rf-transfer>
        <rf-transfer icon="undo">Return Trip</rf-transfer>
        <rf-transfer icon="refresh">New Return</rf-transfer>
      </div>
    </section>
    <div class="split">
      <form>
        <rf-place label="Pickup Location" value="New York, United States"></rf-place>
        <rf-place kind="drop" label="Drop-off Location" value="Brookly Stream, Fleet, Hart, Hampshire, England, United Kingdom"></rf-place>
        <div class="group">
          <rf-fold icon="pin" label="Add Stops" hint="Up to 3 additional stops"></rf-fold>
          <rf-panel><rf-add-stop></rf-add-stop></rf-panel>
        </div>
        <div class="trio">
          <rf-picker kind="text" icon="calendar" label="Date" value="Date"></rf-picker>
          <rf-picker icon="clock" label="Time" value="Select time"></rf-picker>
          <rf-picker icon="users" label="Passengers" value="1 passenger"></rf-picker>
        </div>
        <div class="group">
          <rf-fold icon="plus" label="Add Extras" hint="Luggage, child seats, flight tracking"></rf-fold>
          <rf-panel>
            <rf-counter icon="bag" label="Luggage" hint="Number of bags"></rf-counter>
            <rf-counter icon="baby" label="Child Seats" hint="Max 3 per booking"></rf-counter>
            <rf-flight></rf-flight>
          </rf-panel>
        </div>
        <rf-notes></rf-notes>
        <rf-submit>Continue to Vehicle Selection</rf-submit>
      </form>
      <rf-map></rf-map>
    </div>
  </main>
  <rf-footer></rf-footer>`);
</script>
</body>
</html>
